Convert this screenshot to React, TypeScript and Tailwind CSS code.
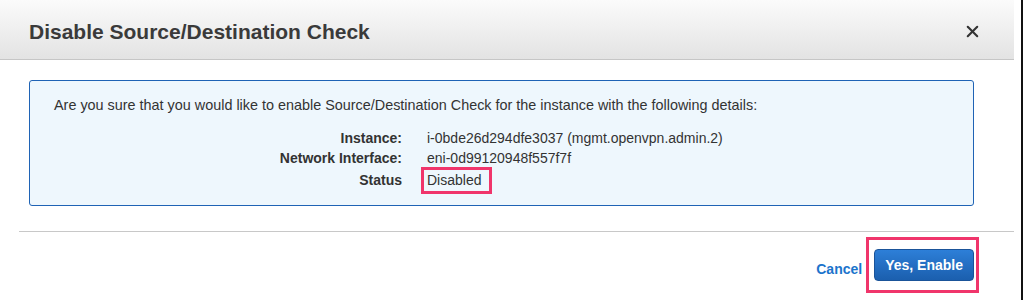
import { X } from 'lucide-react';

const rows = [
  { label: 'Instance:', value: 'i-0bde26d294dfe3037 (mgmt.openvpn.admin.2)' },
  { label: 'Network Interface:', value: 'eni-0d99120948f557f7f' },
];

const App = () => {
  return (
    <div className="w-[1023px] h-[300px] bg-white flex font-['Liberation_Sans',Arial,sans-serif] text-[#333]">
      <div className="w-[1021px] flex flex-col">
        {/* header */}
        <div className="h-[60px] w-[1014px] flex items-center justify-between pl-[29px] pr-[32px] bg-gradient-to-b from-[#fbfbfb] to-[#e3e3e3] border-b border-[#c6c6c6]">
          <h1 className="text-[21px] font-bold text-[#3a3a3a] pt-[4px]">Disable Source/Destination Check</h1>
          <X className="w-[19px] h-[19px] text-[#333] mt-[4px]" strokeWidth={2.6} />
        </div>

        {/* body */}
        <div className="pt-[20px] pl-[29px] pr-[47px]">
          <div className="h-[126px] rounded-[3px] border border-[#1f63b5] bg-[#eef7fd] pl-[24px] pt-[14px] text-[14px]">
            <p className="leading-[20px] text-[14.4px]">
              Are you sure that you would like to enable Source/Destination Check for the instance with the following details:
            </p>
            <div className="mt-[13px] grid grid-cols-[348px_1fr] gap-x-[25px] leading-[20px]">
              {rows.map((r) => (
                <div key={r.label} className="contents">
                  <div className="text-right font-bold">{r.label}</div>
                  <div>{r.value}</div>
                </div>
              ))}
              <div className="text-right font-bold pt-[2px]">Status</div>
              <div className="-ml-[6px] mt-[-1px]">
                <span className="inline-block border-[3px] border-[#f0356b] pl-[3px] pr-[8px] py-[1px] leading-[19px]">Disabled</span>
              </div>
            </div>
          </div>
        </div>

        <div className="mt-[25px] ml-[19px] w-[995px] border-t border-[#c8c8c8]" />

        {/* footer */}
        <div className="flex items-center justify-end pr-[42px] pt-[5px] gap-[4px]">
          <a className="text-[14px] font-bold text-[#1b74cc] mt-[9px]">Cancel</a>
          <div className="border-[3px] border-[#f0356b] pl-[5px] pr-[2px] py-[9px]">
            <button className="h-[32px] px-[10px] rounded-[4px] bg-gradient-to-b from-[#2d7fd8] to-[#1b5fae] border border-[#1a5399] text-white text-[14px] font-bold">
              Yes, Enable
            </button>
          </div>
        </div>
      </div>
      <div className="w-[2px] h-full bg-[#111]" />
    </div>
  );
};

export default App;
